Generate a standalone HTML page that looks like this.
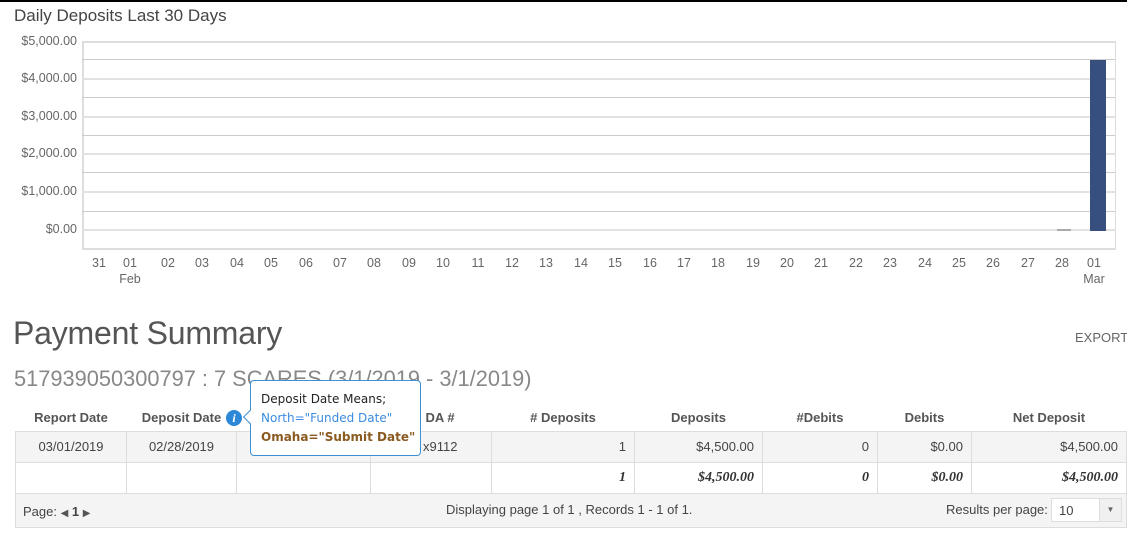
<!DOCTYPE html>
<html><head><meta charset="utf-8"><style>
*{margin:0;padding:0;box-sizing:border-box}
body{width:1127px;height:538px;background:#fff;font-family:"Liberation Sans",sans-serif;position:relative;overflow:hidden;color:#333}
.a{position:absolute;white-space:nowrap}
.yl{position:absolute;right:1050px;font-size:12.5px;color:#666}
.xl{position:absolute;top:255px;font-size:12.5px;color:#666;text-align:center;width:30px;line-height:16px}
.g{position:absolute;left:82px;width:1033px;height:2px;background:#e2e2e2}
table{position:absolute;left:15px;top:404px;border-collapse:collapse;font-size:13px;table-layout:fixed;width:1111px}
th{height:27px;font-weight:bold;color:#555;text-align:center;font-size:13px}
td{height:31px;border:1px solid #ddd;padding:0 8px;color:#444}
.r1 td{background:#f4f4f4}
.num{text-align:right}
.tot td{font-family:"Liberation Serif",serif;font-weight:bold;font-style:italic;font-size:14px;color:#333}
</style></head><body>
<div class="a" style="left:0;top:0;width:1127px;height:2px;background:#000"></div>
<div class="a" style="left:14px;top:6px;font-size:17px;color:#444">Daily Deposits Last 30 Days</div>
<div class="a" style="left:82px;top:41px;width:1034px;height:209px;border:2px solid #ddd;border-right-width:1px"></div>
<div class="g" style="top:59px;height:1px;background:#ccc"></div>
<div class="g" style="top:78px"></div>
<div class="g" style="top:97px;height:1px;background:#ccc"></div>
<div class="g" style="top:116px"></div>
<div class="g" style="top:135px;height:1px;background:#ccc"></div>
<div class="g" style="top:153px"></div>
<div class="g" style="top:172px;height:1px;background:#ccc"></div>
<div class="g" style="top:191px"></div>
<div class="g" style="top:211px;height:1px;background:#ccc"></div>
<div class="g" style="top:229px"></div>
<div class="yl" style="top:34px">$5,000.00</div>
<div class="yl" style="top:71px">$4,000.00</div>
<div class="yl" style="top:109px">$3,000.00</div>
<div class="yl" style="top:146px">$2,000.00</div>
<div class="yl" style="top:184px">$1,000.00</div>
<div class="yl" style="top:222px">$0.00</div>
<div class="a" style="left:1090px;top:60px;width:16px;height:171px;background:#364f7e"></div>
<div class="a" style="left:1057px;top:229px;width:14px;height:2px;background:#aaa"></div>
<div class="xl" style="left:84px">31</div>
<div class="xl" style="left:115px">01<br>Feb</div>
<div class="xl" style="left:153px">02</div><div class="xl" style="left:187px">03</div><div class="xl" style="left:222px">04</div><div class="xl" style="left:256px">05</div><div class="xl" style="left:291px">06</div><div class="xl" style="left:325px">07</div><div class="xl" style="left:359px">08</div><div class="xl" style="left:394px">09</div><div class="xl" style="left:428px">10</div><div class="xl" style="left:463px">11</div><div class="xl" style="left:497px">12</div><div class="xl" style="left:531px">13</div><div class="xl" style="left:566px">14</div><div class="xl" style="left:600px">15</div><div class="xl" style="left:635px">16</div><div class="xl" style="left:669px">17</div><div class="xl" style="left:703px">18</div><div class="xl" style="left:738px">19</div><div class="xl" style="left:772px">20</div><div class="xl" style="left:806px">21</div><div class="xl" style="left:841px">22</div><div class="xl" style="left:875px">23</div><div class="xl" style="left:910px">24</div><div class="xl" style="left:944px">25</div><div class="xl" style="left:978px">26</div><div class="xl" style="left:1013px">27</div><div class="xl" style="left:1047px">28</div>
<div class="xl" style="left:1079px">01<br>Mar</div>

<div class="a" style="left:13px;top:315px;font-size:32px;color:#555;letter-spacing:-0.2px">Payment Summary</div>
<div class="a" style="left:1075px;top:330px;font-size:13px;color:#666">EXPORT</div>
<div class="a" style="left:14px;top:366px;font-size:21.8px;color:#888">517939050300797 : 7 SCARES (3/1/2019 - 3/1/2019)</div>

<table>
<colgroup><col style="width:111px"><col style="width:110px"><col style="width:134px"><col style="width:121px"><col style="width:143px"><col style="width:128px"><col style="width:115px"><col style="width:94px"><col style="width:155px"></colgroup>
<tr><th>Report Date</th><th>Deposit Date</th><th></th><th style="text-align:left;padding-left:55px">DA #</th><th># Deposits</th><th>Deposits</th><th>#Debits</th><th>Debits</th><th>Net Deposit</th></tr>
<tr class="r1"><td style="text-align:center">03/01/2019</td><td style="text-align:center">02/28/2019</td><td></td><td style="padding-left:52px">x9112</td><td class="num">1</td><td class="num">$4,500.00</td><td class="num">0</td><td class="num">$0.00</td><td class="num">$4,500.00</td></tr>
<tr class="tot"><td></td><td></td><td></td><td></td><td class="num">1</td><td class="num">$4,500.00</td><td class="num">0</td><td class="num">$0.00</td><td class="num">$4,500.00</td></tr>
<tr><td colspan="9" style="background:#f4f4f4;height:34px;position:relative">
<span class="a" style="left:7px;top:10px">Page: <span style="font-size:10px;color:#555">&#9664;</span> <b>1</b> <span style="font-size:10px;color:#555">&#9654;</span></span>
<span class="a" style="left:430px;top:8px">Displaying page 1 of 1 , Records 1 - 1 of 1.</span>
<span class="a" style="left:930px;top:8px">Results per page:</span>
<span class="a" style="left:1035px;top:4px;width:71px;height:24px;background:#fff;border:1px solid #ddd;padding:4px 7px">10<span class="a" style="right:0;top:0;width:22px;height:22px;background:#f0f0f0;border-left:1px solid #ddd;font-size:8px;color:#666;text-align:center;line-height:22px">&#9660;</span></span>
</td></tr>
</table>
<div class="a" style="left:226px;top:410px;width:16px;height:16px;border-radius:50%;background:#2e88d8;color:#fff;font:bold italic 12px 'Liberation Serif',serif;text-align:center;line-height:16px">i</div>
<div class="a" style="left:250px;top:380px;width:171px;height:76px;background:#fff;border:1px solid #3d8fd6;border-radius:4px;padding:9px 10px;font-family:'DejaVu Sans',sans-serif;font-size:12px;line-height:19px">
<div style="color:#222">Deposit Date Means;</div>
<div style="color:#3b8be0">North="Funded Date"</div>
<div style="color:#8a5a20;font-weight:bold">Omaha="Submit Date"</div>
</div>
<div class="a" style="left:245px;top:412px;width:10px;height:10px;background:#fff;border-left:1px solid #3d8fd6;border-bottom:1px solid #3d8fd6;transform:rotate(45deg)"></div>
</body></html>
